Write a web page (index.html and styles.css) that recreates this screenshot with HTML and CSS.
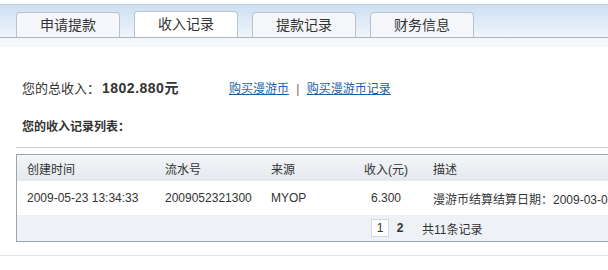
FILE: index.html
```html
<!DOCTYPE html>
<html lang="zh-CN">
<head>
  <meta charset="UTF-8" />
  <title>收入记录</title>
  <link rel="stylesheet" href="styles.css">
</head>
<body>
<div class="tabbar">
  <div class="tab">申请提款</div>
  <div class="tab active">收入记录</div>
  <div class="tab">提款记录</div>
  <div class="tab">财务信息</div>
</div>
<div class="subband"></div>

<div class="content">
  <div class="total">
    <span>您的总收入：<b class="amount">1802.880元</b></span>
    <span class="links">
      <a href="#">购买漫游币</a>
      <span class="sep">|</span>
      <a href="#">购买漫游币记录</a>
    </span>
  </div>
  <div class="list-title">您的收入记录列表：</div>
</div>

<div class="divider"></div>

<div class="record-box">
  <div class="row head">
    <div class="c-time">创建时间</div>
    <div class="c-no">流水号</div>
    <div class="c-src">来源</div>
    <div class="c-amt">收入(元)</div>
    <div class="c-desc">描述</div>
  </div>
  <div class="row data">
    <div class="c-time">2009-05-23 13:34:33</div>
    <div class="c-no">2009052321300</div>
    <div class="c-src">MYOP</div>
    <div class="c-amt num">6.300</div>
    <div class="c-desc">漫游币结算结算日期：2009-03-01至2009-03-31</div>
  </div>
  <div class="row foot">
    <div class="pager">
      <span class="page current">1</span>
      <a class="page" href="#">2</a>
      <span class="count">共11条记录</span>
    </div>
  </div>
</div>

<div class="bottom-line"></div>
</body>
</html>
```

FILE: styles.css
```css
body {
  margin: 0;
  width: 608px;
  height: 270px;
  overflow: hidden;
  background-color: #fff;
  color: #333;
  font-family: "Liberation Sans", "Noto Sans CJK SC", sans-serif;
  font-size: 12px;
}
.tabbar {
  margin-top: 4px;
  height: 32px;
  border-top: 1px solid #c3cbd3;
  border-bottom: 1px solid #a9b5c1;
  background: linear-gradient(#cddff1, #f0f5fb);
  display: flex;
  align-items: flex-end;
  gap: 14px;
  padding-left: 16px;
}
.tab {
  width: 102px;
  height: 24px;
  line-height: 24px;
  border: 1px solid #b8c3ce;
  border-bottom: none;
  border-radius: 4px 4px 0 0;
  background-color: #f4f6fa;
  text-align: center;
  font-size: 14px;
  color: #333;
}
.tab.active {
  background-color: #fff;
  height: 25px;
}
.subband {
  height: 9px;
  background-color: #f5f7fb;
}
.content {
  padding: 0 0 0 22px;
}
.total {
  margin-top: 31px;
  display: flex;
  align-items: center;
  font-size: 13px;
  height: 18px;
}
.amount {
  font-weight: bold;
  font-size: 14px;
  letter-spacing: 0.5px;
  margin-left: 2px;
}
.links {
  margin-left: 50px;
  font-size: 12px;
}
.links a {
  color: #1a5fa8;
  text-decoration: underline;
}
.sep {
  color: #666;
  margin: 0 4px;
}
.list-title {
  margin-top: 22px;
  font-weight: bold;
  font-size: 12px;
  height: 18px;
  line-height: 18px;
}
.divider {
  margin: 11px 0 0 16px;
  height: 1px;
  background-color: #c8ccd1;
}
.record-box {
  margin: 6px 0 0 16px;
  width: 640px;
  border: 1px solid #9ba6b1;
}
.row {
  display: flex;
  align-items: center;
}
.row.head {
  height: 26px;
  background: linear-gradient(#f4f6f8, #e4e8ed);
}
.row.data {
  height: 34px;
  background-color: #fff;
}
.row.foot {
  height: 26px;
  background-color: #eef1f5;
}
.row > div { flex-shrink: 0; box-sizing: border-box; }
.c-time { width: 148px; padding-left: 10px; }
.c-no { width: 106px; }
.c-src { width: 82px; }
.c-amt { width: 80px; text-align: right; padding-right: 25px; }
.c-amt.num { padding-right: 32px; }
.c-desc { width: 224px; white-space: nowrap; overflow: hidden; }
.pager {
  margin-left: 354px;
  display: flex;
  align-items: center;
}
.page {
  display: inline-block;
  width: 16px;
  height: 16px;
  line-height: 16px;
  text-align: center;
  color: #333;
  text-decoration: none;
  font-weight: bold;
}
.page.current {
  background-color: #fff;
  border: 1px solid #d3d8de;
  font-weight: normal;
  margin-right: 3px;
}
.count {
  margin-left: 14px;
}
.bottom-line {
  margin-top: 13px;
  height: 1px;
  background-color: #e3e5e8;
}
```
